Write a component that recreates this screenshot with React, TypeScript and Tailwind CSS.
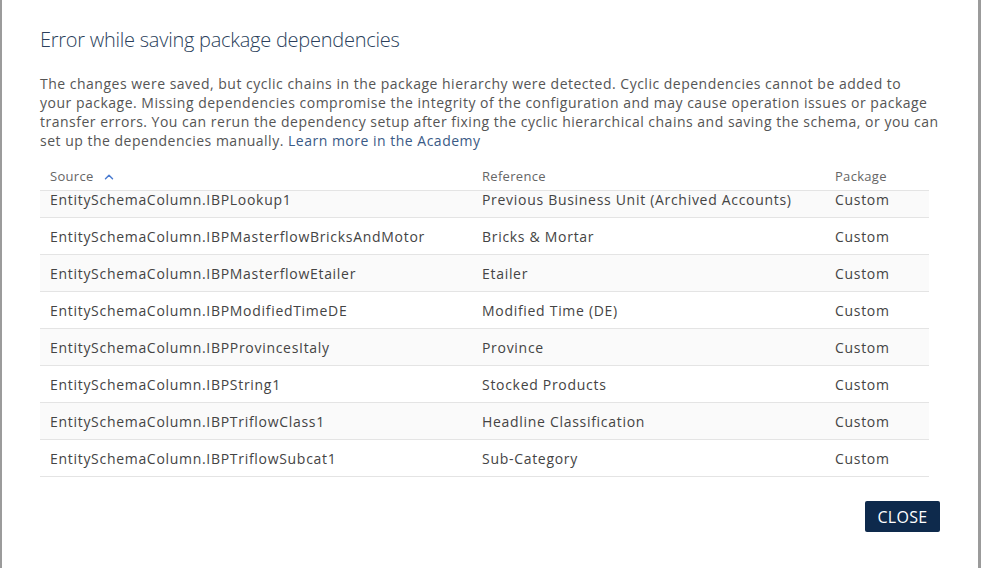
import { ChevronUp } from "lucide-react";

const rows = [
  { source: "EntitySchemaColumn.IBPLookup1", reference: "Previous Business Unit (Archived Accounts)", pkg: "Custom" },
  { source: "EntitySchemaColumn.IBPMasterflowBricksAndMotor", reference: "Bricks & Mortar", pkg: "Custom" },
  { source: "EntitySchemaColumn.IBPMasterflowEtailer", reference: "Etailer", pkg: "Custom" },
  { source: "EntitySchemaColumn.IBPModifiedTimeDE", reference: "Modified Time (DE)", pkg: "Custom" },
  { source: "EntitySchemaColumn.IBPProvincesItaly", reference: "Province", pkg: "Custom" },
  { source: "EntitySchemaColumn.IBPString1", reference: "Stocked Products", pkg: "Custom" },
  { source: "EntitySchemaColumn.IBPTriflowClass1", reference: "Headline Classification", pkg: "Custom" },
  { source: "EntitySchemaColumn.IBPTriflowSubcat1", reference: "Sub-Category", pkg: "Custom" },
];

const font = { fontFamily: '"Open Sans", "Liberation Sans", sans-serif' };

export default function App() {
  return (
    <div className="h-[568px] w-full overflow-hidden bg-[#9b9b9b]" style={font}>
      <div className="ml-[2px] h-full w-[976px] bg-white pl-[38px] pr-[38px] pt-[26px]">
        <h2 className="text-[20px] leading-[28px] font-light tracking-[-0.25px] text-[#2b3f5c]">
          Error while saving package dependencies
        </h2>

        <p className="-mr-[20px] mt-[20px] whitespace-nowrap text-[14px] leading-[19px] tracking-[0.5px] text-[#555]">
          The changes were saved, but cyclic chains in the package hierarchy were detected. Cyclic dependencies cannot be added to
          <br />
          your package. Missing dependencies compromise the integrity of the configuration and may cause operation issues or package
          <br />
          transfer errors. You can rerun the dependency setup after fixing the cyclic hierarchical chains and saving the schema, or you can
          <br />
          set up the dependencies manually. <a className="text-[#3a5a86]">Learn more in the Academy</a>
        </p>

        {/* dependency table, body scrolled a little under the header */}
        <div className="mr-[11px] mt-[13px] text-[14px] tracking-[0.7px] text-[#444]">
          <div className="grid h-[28px] grid-cols-[432px_353px_1fr] items-center border-b border-[#e4e4e4] text-[13px] tracking-[0.3px] text-[#666]">
            <div className="flex items-center gap-[8px] pl-[10px]">
              Source <ChevronUp size={14} strokeWidth={2.5} className="text-[#4a7bd0]" />
            </div>
            <div className="pl-[10px]">Reference</div>
            <div className="pl-[10px]">Package</div>
          </div>
          <div className="h-[286px] overflow-hidden">
            <div className="-mt-[10px]">
              {rows.map((r, i) => (
                <div
                  key={r.source}
                  className={`grid h-[37px] grid-cols-[432px_353px_1fr] items-center border-b border-[#e4e4e4] ${i % 2 === 0 ? "bg-[#fafafa]" : "bg-white"}`}
                >
                  <div className="pl-[10px]">{r.source}</div>
                  <div className="pl-[10px]">{r.reference}</div>
                  <div className="pl-[10px]">{r.pkg}</div>
                </div>
              ))}
            </div>
          </div>
        </div>

        <div className="mt-[24px] flex justify-end">
          <button className="h-[31px] w-[75px] rounded-[2px] bg-[#0e2a4c] text-[16px] tracking-[0.3px] text-white">
            CLOSE
          </button>
        </div>
      </div>
    </div>
  );
}
